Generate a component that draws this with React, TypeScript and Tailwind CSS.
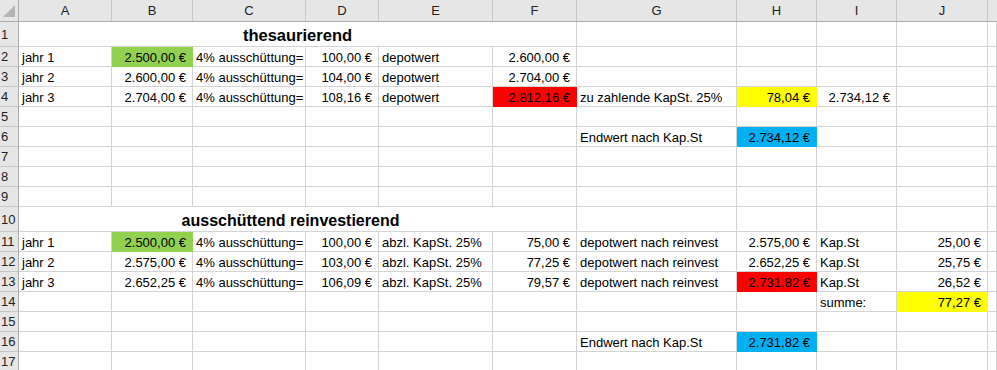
import React from "react";

type C = { t?: string; r?: boolean; bg?: string };

const COLS = ["A", "B", "C", "D", "E", "F", "G", "H", "I", "J", ""];

const grid =
  "grid grid-cols-[19px_93px_81px_113px_73px_114px_84px_160px_80px_80px_91px_1fr]";

const G = "bg-[#92d050] border-[#92d050]";
const R = "bg-[#ff0000] border-[#ff0000]";
const Y = "bg-[#ffff00] border-[#ffff00]";
const B = "bg-[#00b0f0] border-[#00b0f0]";

const n = (t: string, bg?: string): C => ({ t, r: true, bg });
const s = (t: string, bg?: string): C => ({ t, bg });
const e: C = {};

const rows: { num: number; h: string; cells?: C[]; title?: string; shift?: string }[] = [
  { num: 1, h: "grid-rows-[25px] h-[25px]", title: "thesaurierend", shift: "text-[16.5px]" },
  {
    num: 2,
    h: "grid-rows-[20px] h-[20px]",
    cells: [s("jahr 1"), n("2.500,00 €", G), s("4% ausschüttung="), n("100,00 €"), s("depotwert"), n("2.600,00 €"), e, e, e, e, e],
  },
  {
    num: 3,
    h: "grid-rows-[20px] h-[20px]",
    cells: [s("jahr 2"), n("2.600,00 €"), s("4% ausschüttung="), n("104,00 €"), s("depotwert"), n("2.704,00 €"), e, e, e, e, e],
  },
  {
    num: 4,
    h: "grid-rows-[20px] h-[20px]",
    cells: [
      s("jahr 3"),
      n("2.704,00 €"),
      s("4% ausschüttung="),
      n("108,16 €"),
      s("depotwert"),
      n("2.812,16 €", R),
      s("zu zahlende KapSt. 25%"),
      n("78,04 €", Y),
      n("2.734,12 €"),
      e,
      e,
    ],
  },
  { num: 5, h: "grid-rows-[20px] h-[20px]", cells: [e, e, e, e, e, e, e, e, e, e, e] },
  { num: 6, h: "grid-rows-[20px] h-[20px]", cells: [e, e, e, e, e, e, s("Endwert nach Kap.St"), n("2.734,12 €", B), e, e, e] },
  { num: 7, h: "grid-rows-[20px] h-[20px]", cells: [e, e, e, e, e, e, e, e, e, e, e] },
  { num: 8, h: "grid-rows-[20px] h-[20px]", cells: [e, e, e, e, e, e, e, e, e, e, e] },
  { num: 9, h: "grid-rows-[20px] h-[20px]", cells: [e, e, e, e, e, e, e, e, e, e, e] },
  { num: 10, h: "grid-rows-[25px] h-[25px]", title: "ausschüttend reinvestierend", shift: "text-[16px] pr-[14px]" },
  {
    num: 11,
    h: "grid-rows-[20px] h-[20px]",
    cells: [
      s("jahr 1"),
      n("2.500,00 €", G),
      s("4% ausschüttung="),
      n("100,00 €"),
      s("abzl. KapSt. 25%"),
      n("75,00 €"),
      s("depotwert nach reinvest"),
      n("2.575,00 €"),
      s("Kap.St"),
      n("25,00 €"),
      e,
    ],
  },
  {
    num: 12,
    h: "grid-rows-[20px] h-[20px]",
    cells: [
      s("jahr 2"),
      n("2.575,00 €"),
      s("4% ausschüttung="),
      n("103,00 €"),
      s("abzl. KapSt. 25%"),
      n("77,25 €"),
      s("depotwert nach reinvest"),
      n("2.652,25 €"),
      s("Kap.St"),
      n("25,75 €"),
      e,
    ],
  },
  {
    num: 13,
    h: "grid-rows-[20px] h-[20px]",
    cells: [
      s("jahr 3"),
      n("2.652,25 €"),
      s("4% ausschüttung="),
      n("106,09 €"),
      s("abzl. KapSt. 25%"),
      n("79,57 €"),
      s("depotwert nach reinvest"),
      n("2.731,82 €", R),
      s("Kap.St"),
      n("26,52 €"),
      e,
    ],
  },
  { num: 14, h: "grid-rows-[20px] h-[20px]", cells: [e, e, e, e, e, e, e, e, s("summe:"), n("77,27 €", Y), e] },
  { num: 15, h: "grid-rows-[20px] h-[20px]", cells: [e, e, e, e, e, e, e, e, e, e, e] },
  { num: 16, h: "grid-rows-[20px] h-[20px]", cells: [e, e, e, e, e, e, s("Endwert nach Kap.St"), n("2.731,82 €", B), e, e, e] },
  { num: 17, h: "grid-rows-[20px] h-[20px]", cells: [e, e, e, e, e, e, e, e, e, e, e] },
];

function Cell({ c }: { c: C }) {
  const base =
    "min-h-0 border-r border-b flex items-end overflow-hidden whitespace-nowrap leading-[15px] pb-[1px] " +
    (c.bg ? c.bg : "border-[#d4d4d4] bg-white") +
    (c.r ? " justify-end pr-[6px]" : " justify-start pl-[3px]");
  return (
    <div className={base}>
      <span>{c.t ?? ""}</span>
    </div>
  );
}

function RowHead({ num }: { num: number }) {
  return (
    <div className="min-h-0 bg-[#e6e6e6] border-r border-b border-r-[#ababab] border-b-[#c8c8c8] flex items-center pl-[1px] text-[13px] leading-[15px] text-[#222]">
      {num}
    </div>
  );
}

export default function App() {
  return (
    <div className="w-[997px] h-[370px] overflow-hidden bg-white text-black font-['Liberation_Sans',Arial,sans-serif] text-[13px] leading-[15px]">
      <div className={`${grid} grid-rows-[21px] h-[22px] bg-[#e6e6e6] border-b border-[#ababab]`}>
        <div className="border-r border-[#ababab] relative">
          <div className="absolute left-[3px] top-[5px] w-0 h-0 border-l-[12px] border-l-transparent border-b-[12px] border-b-[#b4b4b4]" />
        </div>
        {COLS.map((c, i) => (
          <div
            key={i}
            className={`flex items-center justify-center text-[13px] text-[#222] ${i < COLS.length - 1 ? "border-r border-[#c8c8c8]" : ""}`}
          >
            {c}
          </div>
        ))}
      </div>
      {rows.map((row) => (
        <div key={row.num} className={`${grid} ${row.h}`}>
          <RowHead num={row.num} />
          {row.title ? (
            <>
              <div
                className={`min-h-0 col-span-6 border-r border-b border-[#d4d4d4] flex items-end justify-center ${row.shift} font-bold leading-[19px] pb-[1px]`}
              >
                {row.title}
              </div>
              {[0, 1, 2, 3, 4].map((i) => (
                <Cell key={i} c={e} />
              ))}
            </>
          ) : (
            row.cells!.map((c, i) => <Cell key={i} c={c} />)
          )}
        </div>
      ))}
    </div>
  );
}
